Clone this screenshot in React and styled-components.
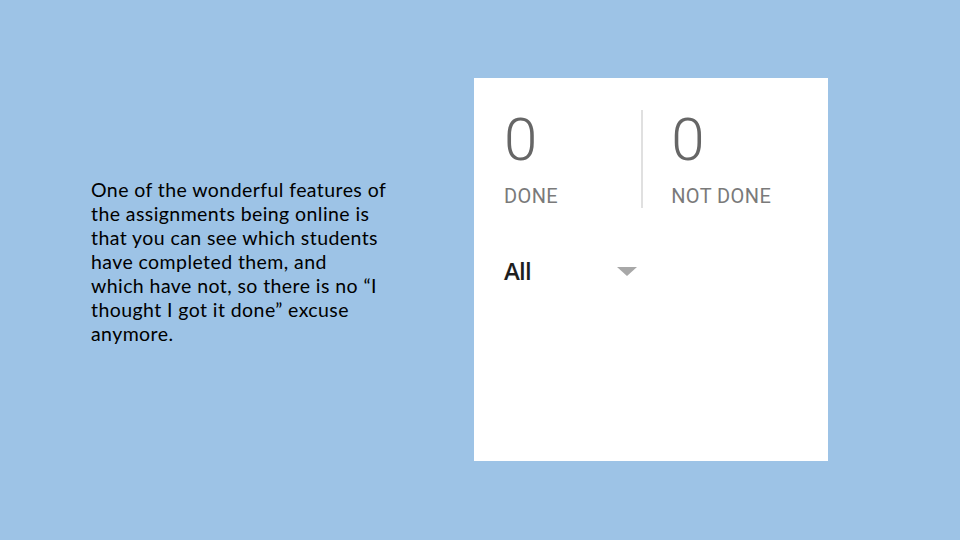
import React from "react";
import styled, { createGlobalStyle } from "styled-components";

const GlobalStyle = createGlobalStyle`
  html, body {
    margin: 0;
    padding: 0;
  }
  body {
    background: #9dc3e6;
  }
`;

const lines = [
  "One of the wonderful features of",
  "the assignments being online is",
  "that you can see which students",
  "have completed them, and",
  "which have not, so there is no \u201cI",
  "thought I got it done\u201d excuse",
  "anymore.",
];

const Slide = styled.div`
  width: 960px;
  height: 540px;
  display: flex;
  align-items: flex-start;
  background: #9dc3e6;
`;

const Caption = styled.div`
  margin: 178px 0 0 91px;
  width: 330px;
  font-family: Lato, "Open Sans", sans-serif;
  font-size: 19.5px;
  letter-spacing: 0.42px;
  line-height: 24px;
  color: #000;
`;

const Line = styled.span`
  display: block;
  white-space: nowrap;
`;

const Card = styled.div`
  margin: 78px 0 0 53px;
  width: 354px;
  height: 383px;
  background: #fff;
  box-sizing: border-box;
  padding: 32px 0 0 30px;
  font-family: Roboto, "Open Sans", sans-serif;
`;

const Stats = styled.div`
  display: flex;
`;

const Stat = styled.div`
  display: flex;
  flex-direction: column;
  width: ${({ $width }) => $width}px;
  padding-left: ${({ $inset }) => $inset}px;
  border-left: ${({ $divider }) => ($divider ? "2px solid #e0e0e0" : "none")};
`;

const Count = styled.div`
  font-size: 60px;
  font-weight: 300;
  line-height: 60px;
  color: #666;
`;

const Label = styled.div`
  margin-top: 14px;
  font-size: 20px;
  line-height: 24px;
  color: #7a7a7a;
  letter-spacing: 0.4px;
`;

const Filter = styled.div`
  margin-top: 46px;
  width: 133px;
  display: flex;
  align-items: center;
  justify-content: space-between;
`;

const FilterText = styled.span`
  font-family: "Open Sans", "Liberation Sans", sans-serif;
  font-size: 24px;
  font-weight: 600;
  color: #1e1e1e;
  letter-spacing: -0.8px;
`;

const Caret = styled.span`
  width: 0;
  height: 0;
  margin-top: 2px;
  border-left: 10px solid transparent;
  border-right: 10px solid transparent;
  border-top: 9px solid #a8a8a8;
`;

export default function App() {
  return (
    <>
      <GlobalStyle />
      <Slide>
        <Caption>
          {lines.map((line, i) => (
            <Line key={i}>{line}</Line>
          ))}
        </Caption>
        <Card>
          <Stats>
            <Stat $width={140} $inset={0}>
              <Count>0</Count>
              <Label>DONE</Label>
            </Stat>
            <Stat $width={160} $inset={28} $divider>
              <Count>0</Count>
              <Label>NOT DONE</Label>
            </Stat>
          </Stats>
          <Filter>
            <FilterText>All</FilterText>
            <Caret />
          </Filter>
        </Card>
      </Slide>
    </>
  );
}
